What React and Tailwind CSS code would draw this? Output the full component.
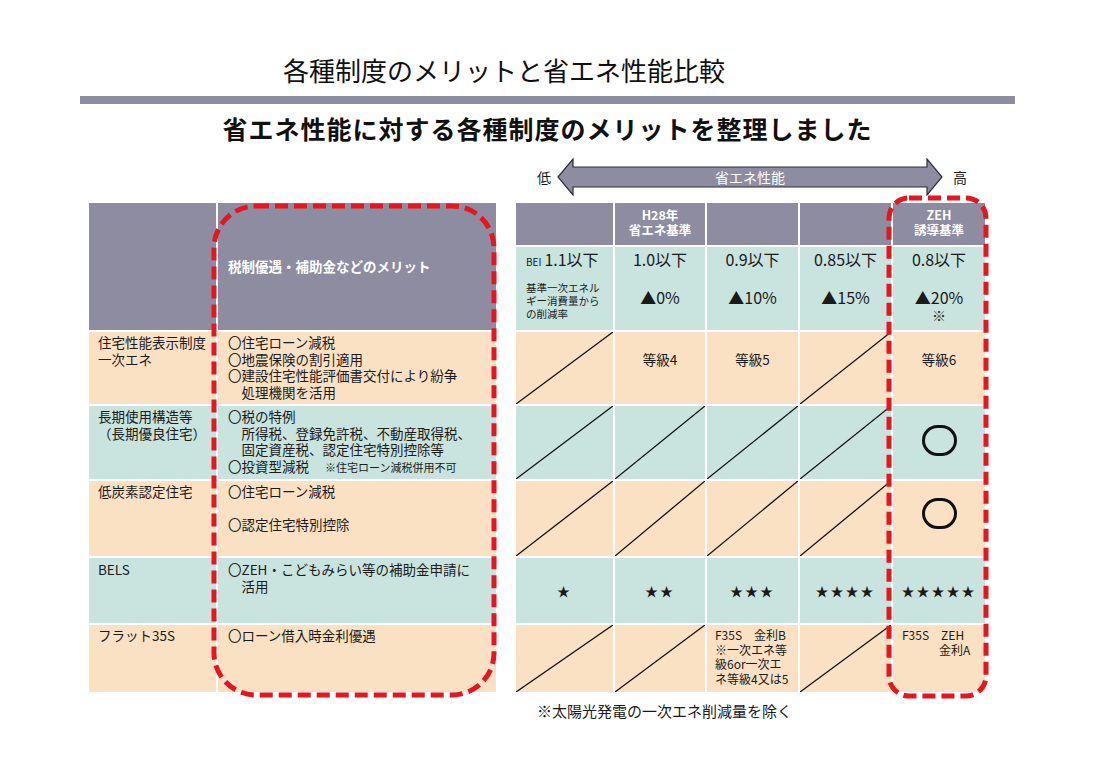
import React from "react";

const peach = "bg-[#fae1c4]";
const teal = "bg-[#c9e3de]";
const head = "bg-[#8e8ca1]";

function Diag() {
  return (
    <svg
      className="absolute inset-0 w-full h-full"
      viewBox="0 0 100 100"
      preserveAspectRatio="none"
    >
      <line
        x1="0"
        y1="100"
        x2="100"
        y2="0"
        stroke="#111"
        strokeWidth="1.3"
        vectorEffect="non-scaling-stroke"
      />
    </svg>
  );
}

function DashedBox({ w, h, r, className }) {
  return (
    <svg width={w} height={h} className={className}>
      <rect
        x="5"
        y="5"
        width={w - 10}
        height={h - 10}
        rx={r}
        fill="none"
        stroke="#e8141e"
        strokeWidth="5"
        strokeDasharray="13 6"
      />
    </svg>
  );
}

function Cell({ bg, diag, className = "", children }) {
  return (
    <div className={`relative ${bg} ${className}`}>
      {diag && <Diag />}
      {children}
    </div>
  );
}

function Ring() {
  return <div className="w-[35px] h-[31px] rounded-full border-[3px] border-[#111]" />;
}

const leftRows = [
  {
    bg: peach,
    name: ["住宅性能表示制度", "一次エネ"],
    merits: ["〇住宅ローン減税", "〇地震保険の割引適用", "〇建設住宅性能評価書交付により紛争", "　処理機関を活用"],
  },
  {
    bg: teal,
    name: ["長期使用構造等", "（長期優良住宅）"],
    merits: [
      "〇税の特例",
      "　所得税、登録免許税、不動産取得税、",
      "　固定資産税、認定住宅特別控除等",
      null,
    ],
  },
  {
    bg: peach,
    name: ["低炭素認定住宅"],
    merits: ["〇住宅ローン減税", "\u00a0", "〇認定住宅特別控除"],
  },
  {
    bg: teal,
    name: ["BELS"],
    merits: ["〇ZEH・こどもみらい等の補助金申請に", "　活用"],
    pt: "pt-[3px]",
  },
  {
    bg: peach,
    name: ["フラット35S"],
    merits: ["〇ローン借入時金利優遇"],
  },
];

export default function App() {
  return (
    <div className="w-[1095px] h-[773px] bg-white text-[#1a1a1a] font-['Noto_Sans_CJK_JP','Noto_Sans',sans-serif] overflow-hidden">
      <div className="pt-[52px] pl-[283px] text-[26px] leading-[36px] text-[#111]">
        各種制度のメリットと省エネ性能比較
      </div>
      <div className="mt-[8px] mx-[80px] h-[8px] bg-[#8e8ca1]" />
      <div className="mt-[7px] text-center text-[25px] leading-[34px] font-bold tracking-[1px] text-[#111]">
        省エネ性能に対する各種制度のメリットを整理しました
      </div>

      <div className="mt-[13px] h-[38px] flex items-center pl-[537px]">
        <span className="text-[14px] leading-none">低</span>
        <div className="relative ml-[5px] w-[388px] h-[38px]">
          <svg width="388" height="38" className="absolute inset-0">
            <polygon
              points="2,19 17,1 17,9 371,9 371,1 386,19 371,37 371,29 17,29 17,37"
              fill="#8e8ca1"
              stroke="#2e2e3e"
              strokeWidth="1.2"
            />
          </svg>
          <div className="absolute inset-0 flex items-center justify-center text-white text-[14px]">
            省エネ性能
          </div>
        </div>
        <span className="ml-[9px] text-[14px] leading-none">高</span>
      </div>

      <div className="relative mt-[7px] flex pl-[89px] gap-[20px]">
        {/* left table */}
        <div className="grid grid-cols-[127px_278px] grid-rows-[127px_72px_73px_75px_65px_67px] gap-[2px]">
          <div className={head} />
          <div className={`${head} flex items-center pl-[10px] text-white font-bold text-[13.5px]`}>
            税制優遇・補助金などのメリット
          </div>
          {leftRows.map((row, i) => (
            <React.Fragment key={i}>
              <div className={`${row.bg} pl-[9px] ${row.pt || "pt-[2px]"} text-[13.5px] leading-[16.5px]`}>
                {row.name.map((t, j) => (
                  <div key={j}>{t}</div>
                ))}
              </div>
              <div className={`${row.bg} pl-[10px] ${row.pt || "pt-[2px]"} text-[13.5px] leading-[16.5px] whitespace-pre`}>
                {row.merits.map((t, j) =>
                  t === null ? (
                    <div key={j}>
                      〇投資型減税<span className="ml-[16px] text-[11px]">※住宅ローン減税併用不可</span>
                    </div>
                  ) : (
                    <div key={j}>{t}</div>
                  )
                )}
              </div>
            </React.Fragment>
          ))}
        </div>

        {/* right table */}
        <div className="grid grid-cols-[97px_90px_91px_91px_92px] grid-rows-[42px_83px_72px_73px_75px_65px_67px] gap-[2px]">
          <div className={head} />
          <div className={`${head} flex flex-col items-center pt-[4px] text-white font-bold text-[12.5px] leading-[15px]`}>
            <span>H28年</span>
            <span>省エネ基準</span>
          </div>
          <div className={head} />
          <div className={head} />
          <div className={`${head} flex flex-col items-center pt-[4px] text-white font-bold text-[12.5px] leading-[15px]`}>
            <span>ZEH</span>
            <span>誘導基準</span>
          </div>

          {/* BEI row */}
          <div className={`${teal} pl-[10px] pt-[1px]`}>
            <div className="leading-[22px]">
              <span className="text-[10px]">BEI</span>
              <span className="ml-[3px] text-[16px]">1.1以下</span>
            </div>
            <div className="mt-[8px] text-[10.5px] leading-[13px]">
              <div>基準一次エネル</div>
              <div>ギー消費量から</div>
              <div>の削減率</div>
            </div>
          </div>
          {[
            ["1.0以下", "▲0%"],
            ["0.9以下", "▲10%"],
            ["0.85以下", "▲15%"],
            ["0.8以下", "▲20%"],
          ].map(([a, b], i) => (
            <div key={a} className={`${teal} flex flex-col items-center pt-[1px] text-[16px] leading-[22px]`}>
              <span>{a}</span>
              <span className="mt-[16px]">{b}</span>
              {i === 3 && <span className="leading-[14px] text-[14px]">※</span>}
            </div>
          ))}

          {/* 住宅性能表示制度 */}
          <Cell bg={peach} diag />
          <Cell bg={peach} className="flex justify-center pt-[17px] text-[13.5px] leading-[20px]">等級4</Cell>
          <Cell bg={peach} className="flex justify-center pt-[17px] text-[13.5px] leading-[20px]">等級5</Cell>
          <Cell bg={peach} diag />
          <Cell bg={peach} className="flex justify-center pt-[17px] text-[13.5px] leading-[20px]">等級6</Cell>

          {/* 長期優良住宅 */}
          <Cell bg={teal} diag />
          <Cell bg={teal} diag />
          <Cell bg={teal} diag />
          <Cell bg={teal} diag />
          <Cell bg={teal} className="flex items-center justify-center pb-[5px]">
            <Ring />
          </Cell>

          {/* 低炭素 */}
          <Cell bg={peach} diag />
          <Cell bg={peach} diag />
          <Cell bg={peach} diag />
          <Cell bg={peach} diag />
          <Cell bg={peach} className="flex items-center justify-center pb-[11px]">
            <Ring />
          </Cell>

          {/* BELS */}
          {["★", "★★", "★★★", "★★★★", "★★★★★"].map((s) => (
            <Cell key={s} bg={teal} className="flex items-center justify-center text-[13px] tracking-[2px]">
              {s}
            </Cell>
          ))}

          {/* フラット35S */}
          <Cell bg={peach} diag />
          <Cell bg={peach} diag />
          <Cell bg={peach} className="pl-[8px] pt-[3px] text-[12px] leading-[14.5px]">
            <div>F35S　金利B</div>
            <div>※一次エネ等</div>
            <div>級6or一次エ</div>
            <div>ネ等級4又は5</div>
          </Cell>
          <Cell bg={peach} diag />
          <Cell bg={peach} className="pl-[9px] pt-[3px] text-[12px] leading-[14.5px]">
            <div>F35S　ZEH</div>
            <div className="pl-[37px]">金利A</div>
          </Cell>
        </div>

        <DashedBox w={290} h={499} r={42} className="absolute left-[209px] top-[-2px] pointer-events-none" />
        <DashedBox w={107} h={508} r={20} className="absolute left-[884px] top-[-10px] pointer-events-none" />
      </div>

      <div className="mt-[9px] pl-[537px] text-[15px] leading-[20px]">
        ※太陽光発電の一次エネ削減量を除く
      </div>
    </div>
  );
}
